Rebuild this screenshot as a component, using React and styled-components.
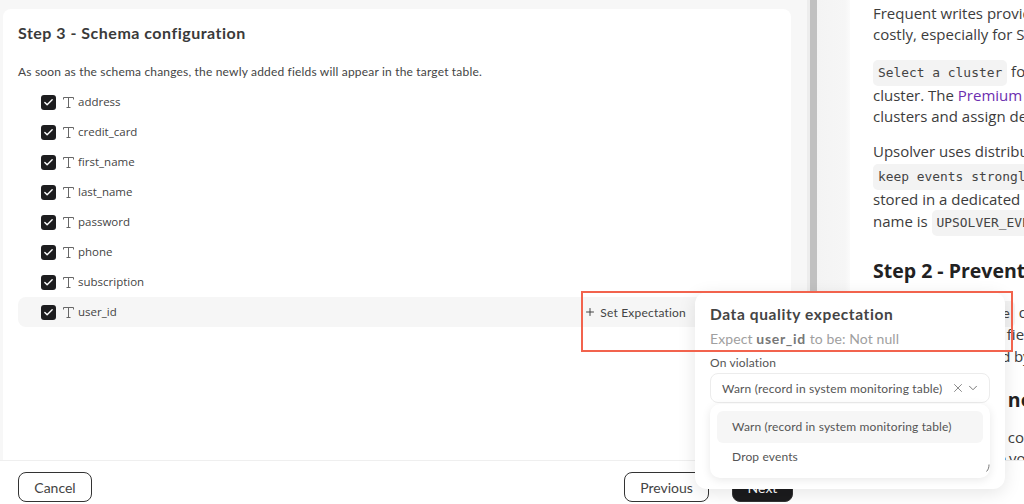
import styled, { createGlobalStyle } from 'styled-components';
import { Plus, X, ChevronDown, Check } from 'lucide-react';

const fields = ['address', 'credit_card', 'first_name', 'last_name', 'password', 'phone', 'subscription', 'user_id'];

const GlobalStyle = createGlobalStyle`
  html, body {
    margin: 0;
    padding: 0;
    background: #fff;
    overflow: hidden;
  }
  * {
    box-sizing: border-box;
  }
`;

const Page = styled.div`
  position: relative;
  width: 1024px;
  height: 504px;
  overflow: hidden;
  display: flex;
  flex-direction: column;
  font-family: 'Lato', 'Liberation Sans', sans-serif;
  color: #333;
`;

const Main = styled.div`
  height: 460px;
  display: flex;
  overflow: hidden;
`;

const LeftPane = styled.div`
  width: 807px;
  flex: none;
  padding: 9px 16px 0 3px;
  background: #f7f7f7;
`;

const Card = styled.section`
  height: 451px;
  background: #fff;
  border-radius: 8px 8px 0 0;
  padding: 14px 15px 0;
`;

const Title = styled.h2`
  margin: 0;
  font-size: 16px;
  line-height: 20px;
  font-weight: 700;
  letter-spacing: 0.5px;
  color: #3a3a3a;
`;

const Description = styled.p`
  margin: 20px 0 6px;
  font-size: 12px;
  line-height: 18px;
  letter-spacing: 0.18px;
  color: #444;
`;

const Row = styled.div`
  height: 30px;
  display: flex;
  align-items: center;
  padding: 0 90px 0 23px;
  border-radius: 8px;
  background: ${(p) => (p.$active ? '#f6f6f6' : 'transparent')};
`;

const CheckBox = styled.span`
  width: 15px;
  height: 15px;
  flex: none;
  display: flex;
  align-items: center;
  justify-content: center;
  border-radius: 3px;
  background: #1d1d1f;
  color: #fff;
`;

const TypeIcon = styled.svg`
  width: 13px;
  height: 13px;
  margin: 0 3px 0 6px;
  flex: none;
  color: #666;
`;

const FieldName = styled.span`
  font-family: 'Open Sans', sans-serif;
  font-size: 11.5px;
  line-height: 14px;
  margin-top: -1px;
  color: #444;
`;

const SetExpectation = styled.span`
  margin-left: auto;
  display: flex;
  align-items: center;
  gap: 4px;
  font-size: 12px;
  letter-spacing: 0.2px;
  color: #444;
`;

const Divider = styled.div`
  width: 3px;
  flex: none;
  background: #ededed;
`;

const ScrollThumb = styled.div`
  width: 7px;
  flex: none;
  background: #c1c1c1;
`;

const Gutter = styled.div`
  width: 33px;
  flex: none;
  background: linear-gradient(90deg, #f4f4f4 0%, #f6f6f6 85%, #fbfbfb 100%);
`;

const Doc = styled.article`
  flex: 1;
  min-width: 0;
  padding: 3px 0 0 23px;
  background: #fff;
  font-family: 'Open Sans', sans-serif;
  font-size: 15px;
  line-height: 21px;
  color: #3c3c3c;
  white-space: nowrap;
  overflow: hidden;
`;

const DocParagraph = styled.p`
  margin: 0 0 ${(p) => p.$gap || 14}px;
`;

const DocLine = styled.div`
  height: ${(p) => p.$h || 21}px;
  line-height: ${(p) => p.$h || 21}px;
  margin-bottom: ${(p) => p.$after || 0}px;
  word-spacing: ${(p) => p.$spacing || 0}px;
`;

const Code = styled.code`
  display: inline-block;
  padding: 0 5px;
  border-radius: 5px;
  background: #f3f3f3;
  font-family: 'DejaVu Sans Mono', 'Liberation Mono', monospace;
  font-size: 12.9px;
  line-height: 26px;
  color: #444;
`;

const DocLink = styled.a`
  color: #6c2eb0;
`;

const DocHeading = styled.h3`
  margin: 0 0 ${(p) => p.$gap || 0}px;
  font-size: 19.5px;
  line-height: 24px;
  font-weight: 700;
  color: #222;
`;

const Footer = styled.footer`
  height: 44px;
  flex: none;
  display: flex;
  align-items: flex-start;
  justify-content: space-between;
  padding: 11px 231px 0 18px;
  background: #fff;
  border-top: 1px solid #efefef;
`;

const FooterGroup = styled.div`
  display: flex;
  gap: 23px;
`;

const Button = styled.button`
  height: 30px;
  width: ${(p) => p.$w}px;
  border-radius: 8px;
  border: 1px solid #333;
  background: ${(p) => (p.$primary ? '#1b1b1d' : '#fff')};
  color: ${(p) => (p.$primary ? '#fff' : '#444')};
  font-family: 'Lato', sans-serif;
  font-size: 14px;
  padding: 0;
`;

const Popover = styled.div`
  position: absolute;
  left: 695px;
  top: 292px;
  width: 310px;
  height: 197px;
  padding: 12px 15px 0;
  background: #fff;
  border-radius: 12px;
  box-shadow: 0 4px 18px rgba(0, 0, 0, 0.1);
`;

const PopoverTitle = styled.div`
  font-size: 15.5px;
  line-height: 20px;
  font-weight: 700;
  letter-spacing: 0.6px;
  color: #444;
`;

const ExpectLine = styled.div`
  margin-top: 5px;
  font-size: 14px;
  line-height: 20px;
  letter-spacing: 0.1px;
  color: #a0a0a0;

  b {
    letter-spacing: 0.7px;
    color: #777;
  }
`;

const ViolationLabel = styled.div`
  margin-top: 6px;
  font-size: 12px;
  line-height: 16px;
  letter-spacing: 0.15px;
  color: #555;
`;

const Select = styled.div`
  position: relative;
  margin-top: 2px;
  height: 30px;
  display: flex;
  align-items: center;
  padding: 0 9px 0 11px;
  border: 1px solid #ececec;
  border-radius: 8px;
  font-size: 12px;
  letter-spacing: 0.16px;
  color: #555;
`;

const SelectIcons = styled.span`
  margin-left: auto;
  display: flex;
  align-items: center;
  gap: 1px;
  color: #666;
`;

const Dropdown = styled.div`
  position: relative;
  margin-top: 1px;
  height: 74px;
  padding: 7px;
  border-radius: 10px;
  background: #fff;
  box-shadow: 0 2px 10px rgba(0, 0, 0, 0.09);
`;

const Option = styled.div`
  height: 32px;
  margin-bottom: ${(p) => (p.$active ? '-3px' : 0)};
  padding: 0 15px ${(p) => (p.$active ? '2px' : 0)};
  display: flex;
  align-items: center;
  border-radius: 6px;
  background: ${(p) => (p.$active ? '#f6f6f6' : 'transparent')};
  font-size: 12px;
  letter-spacing: 0.14px;
  color: #555;
`;

const ScrollCorner = styled.svg`
  position: absolute;
  right: 0;
  bottom: 6px;
  width: 4px;
  height: 8px;
  color: #777;
`;

const Callout = styled.div`
  position: absolute;
  left: 581px;
  top: 291px;
  width: 432px;
  height: 61px;
  border: 2px solid #f2634d;
  pointer-events: none;
`;

export default function App() {
  return (
    <Page>
      <GlobalStyle />
      <Main>
        <LeftPane>
          <Card>
            <Title>Step 3 - Schema configuration</Title>
            <Description>As soon as the schema changes, the newly added fields will appear in the target table.</Description>
            {fields.map((name) => (
              <Row key={name} $active={name === 'user_id'}>
                <CheckBox>
                  <Check size={11} strokeWidth={3} />
                </CheckBox>
                <TypeIcon viewBox="0 0 13 13" fill="none" stroke="currentColor" strokeWidth="1">
                  <path d="M1.5 3.5V1.5H11.5V3.5M6.5 1.5V11.5M4.5 11.5H8.5" />
                </TypeIcon>
                <FieldName>{name}</FieldName>
                {name === 'user_id' && (
                  <SetExpectation>
                    <Plus size={12} />
                    Set Expectation
                  </SetExpectation>
                )}
              </Row>
            ))}
          </Card>
        </LeftPane>
        <Divider />
        <ScrollThumb />
        <Gutter />
        <Doc>
          <DocParagraph $gap={14}>
            <DocLine>Frequent writes provide fresher data but can be</DocLine>
            <DocLine>costly, especially for Snowflake warehouses.</DocLine>
          </DocParagraph>
          <DocParagraph $gap={14}>
            <DocLine $h={24} $after={2}>
              <Code>Select a cluster</Code> for the job to run on a
            </DocLine>
            <DocLine>
              cluster. The <DocLink>Premium</DocLink> plan lets you create
            </DocLine>
            <DocLine>clusters and assign dedicated resources.</DocLine>
          </DocParagraph>
          <DocParagraph $gap={28}>
            <DocLine>Upsolver uses distributed locking to</DocLine>
            <DocLine $h={27}>
              <Code>keep events strongly ordered</Code> in each
            </DocLine>
            <DocLine>stored in a dedicated system table. Its</DocLine>
            <DocLine>
              name is <Code>UPSOLVER_EVENTS</Code>
            </DocLine>
          </DocParagraph>
          <DocHeading $gap={18}>Step 2 - Prevent duplicates</DocHeading>
          <DocParagraph $gap={21}>
            <DocLine $h={22}>
              <Code>Deduplicate table</Code> duplicates
            </DocLine>
            <DocLine $h={22} $spacing={1.7}>
              Choose which key fields
            </DocLine>
            <DocLine $h={22} $spacing={-0.5}>
              fields are separated by
            </DocLine>
          </DocParagraph>
          <DocHeading $gap={15}>Step 3 - Allow no issues</DocHeading>
          <DocLine $spacing={-1}>Defines a retention control</DocLine>
          <DocLine $spacing={-1}>Use it to reduce the volume</DocLine>
        </Doc>
      </Main>
      <Footer>
        <Button $w={74}>Cancel</Button>
        <FooterGroup>
          <Button $w={85}>Previous</Button>
          <Button $w={61} $primary>
            Next
          </Button>
        </FooterGroup>
      </Footer>
      <Popover>
        <PopoverTitle>Data quality expectation</PopoverTitle>
        <ExpectLine>
          Expect <b>user_id</b> to be: Not null
        </ExpectLine>
        <ViolationLabel>On violation</ViolationLabel>
        <Select>
          Warn (record in system monitoring table)
          <SelectIcons>
            <X size={14} strokeWidth={1.3} />
            <ChevronDown size={14} strokeWidth={1.5} />
          </SelectIcons>
        </Select>
        <Dropdown>
          <Option $active>Warn (record in system monitoring table)</Option>
          <Option>Drop events</Option>
          <ScrollCorner viewBox="0 0 4 8" fill="none" stroke="currentColor">
            <path d="M3 0.5C3 3 2.5 5.5 0.5 7.5" />
          </ScrollCorner>
        </Dropdown>
      </Popover>
      <Callout />
    </Page>
  );
}
